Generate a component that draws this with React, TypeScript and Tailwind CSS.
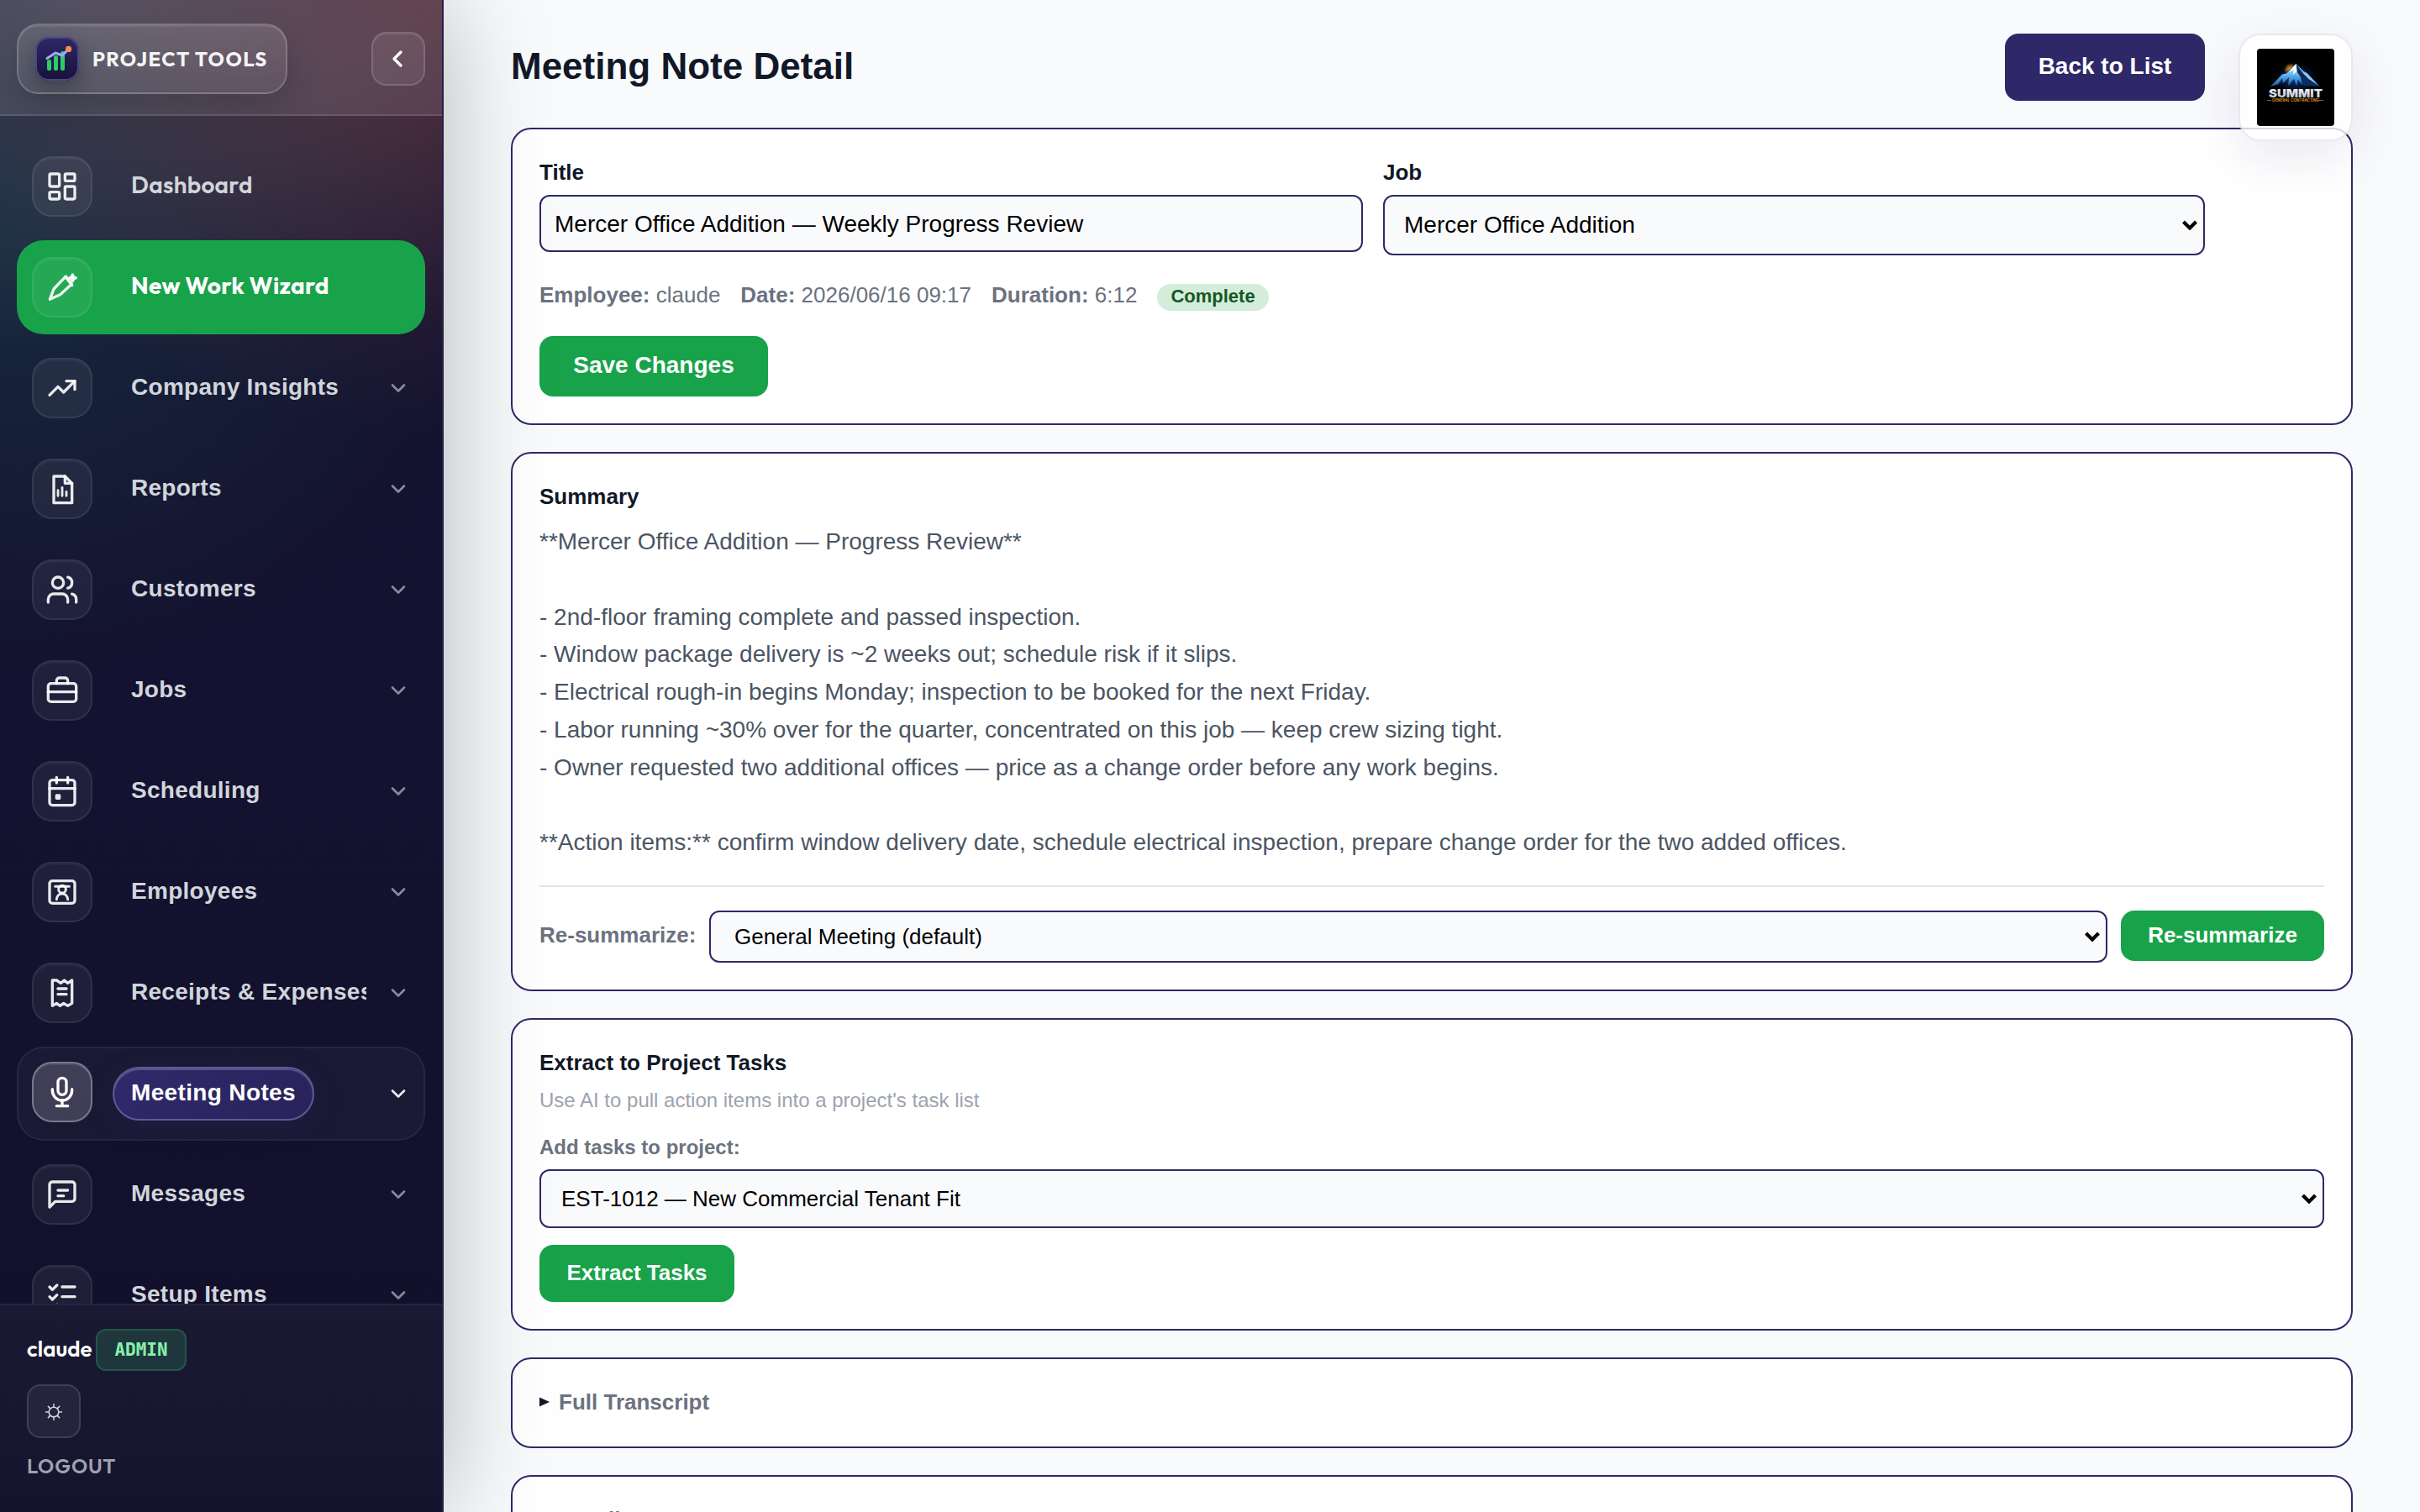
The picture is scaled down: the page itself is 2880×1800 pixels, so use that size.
import React from "react";

const geo = "font-['Outfit','Lato',sans-serif]";

type NavItem = {
  label: string;
  icon: React.ReactNode;
  chevron?: boolean;
  kind?: "primary" | "active" | "brand";
};

const nav: NavItem[] = [
  {
    label: "Dashboard",
    kind: "brand",
    chevron: false,
    icon: (
      <>
        <rect x="3" y="3" width="7" height="9" rx="1" />
        <rect x="14" y="3" width="7" height="5" rx="1" />
        <rect x="14" y="12" width="7" height="9" rx="1" />
        <rect x="3" y="16" width="7" height="5" rx="1" />
      </>
    ),
  },
  {
    label: "New Work Wizard",
    kind: "primary",
    chevron: false,
    icon: (
      <>
        <path d="M3.2 20.6 6 13.2l8.2-8.6 4.6 5.2-8.2 7.4Z" />
        <path d="M14.6 4.2 19 10.6" />
        <path d="m19.4 3 .7 1.7 1.7.6-1.7.8-.7 1.6-.7-1.6-1.5-.8 1.5-.6Z" fill="currentColor" />
      </>
    ),
  },
  {
    label: "Company Insights",
    icon: (
      <>
        <path d="m3 17 6-6 4 4 8-8" />
        <path d="M15 7h6v6" />
      </>
    ),
  },
  {
    label: "Reports",
    icon: (
      <>
        <path d="M6 3h8l5 5v14H6Z" />
        <path d="M14 3v5h5" />
        <path d="M9 13v4M12 11v6M15 14v3" strokeWidth="1.7" />
      </>
    ),
  },
  {
    label: "Customers",
    icon: (
      <>
        <path d="M16 21v-2a4 4 0 0 0-4-4H6a4 4 0 0 0-4 4v2" />
        <circle cx="9" cy="7" r="4" />
        <path d="M22 21v-2a4 4 0 0 0-3-3.87" />
        <path d="M16 3.13a4 4 0 0 1 0 7.75" />
      </>
    ),
  },
  {
    label: "Jobs",
    icon: (
      <>
        <rect x="2" y="7" width="20" height="13" rx="2" />
        <path d="M16 7V5a2 2 0 0 0-2-2h-4a2 2 0 0 0-2 2v2" />
        <path d="M2 13h20" />
      </>
    ),
  },
  {
    label: "Scheduling",
    icon: (
      <>
        <rect x="3" y="4" width="18" height="18" rx="2" />
        <path d="M16 2v4M8 2v4M3 10h18" />
        <rect x="8" y="15" width="2" height="2" />
      </>
    ),
  },
  {
    label: "Employees",
    icon: (
      <>
        <rect x="3" y="4" width="18" height="16" rx="2" />
        <circle cx="12" cy="10" r="2.6" strokeWidth="1.8" />
        <path d="M8 17.2c.2-2.4 1.8-4 4-4s3.8 1.6 4 4" strokeWidth="1.8" />
        <path d="M7 8h10" strokeWidth="1.8" />
      </>
    ),
  },
  {
    label: "Receipts & Expenses",
    icon: (
      <>
        <path d="M5 3v18.2l3-1.8 2.5 1.8 2.5-1.8 3 1.8 3-1.8V3l-3 2-2.500-2-2.500 2L8 3Z" />
        <path d="M9 9h6M9 13h6" />
      </>
    ),
  },
  {
    label: "Meeting Notes",
    kind: "active",
    icon: (
      <>
        <rect x="9" y="2" width="6" height="12" rx="3" />
        <path d="M19 10v1a7 7 0 0 1-14 0v-1" />
        <path d="M12 18v4M8 22h8" />
      </>
    ),
  },
  {
    label: "Messages",
    icon: (
      <>
        <path d="M21 15a2 2 0 0 1-2 2H7l-4 4V5a2 2 0 0 1 2-2h14a2 2 0 0 1 2 2z" />
        <path d="M9 9h7M9 13h4" />
      </>
    ),
  },
  {
    label: "Setup Items",
    icon: (
      <>
        <path d="m3 6 2 2 3.3-3.2" />
        <path d="m3 13 2 2 3.3-3.2" />
        <path d="m3 20 2 2 3.3-3.2" />
        <path d="M12 6h9M12 13h9M12 20h9" />
      </>
    ),
  },
];

function Stroke({ className, width = 2, children }: { className: string; width?: number; children: React.ReactNode }) {
  return (
    <svg
      viewBox="0 0 24 24"
      fill="none"
      stroke="currentColor"
      strokeWidth={width}
      strokeLinecap="round"
      strokeLinejoin="round"
      className={className}
    >
      {children}
    </svg>
  );
}

function NavRow({ item }: { item: NavItem }) {
  const active = item.kind === "active";
  const primary = item.kind === "primary";
  const row = active
    ? "border-white/[0.06] bg-white/[0.035]"
    : primary
      ? "border-transparent bg-[#18a34a]"
      : "border-transparent";
  const tile = active
    ? "border-white/30 bg-white/[0.17] text-white mb-1 shadow-[inset_0_2px_0_rgba(255,255,255,0.08)]"
    : "border-white/[0.08] bg-white/[0.06] text-white/90 shadow-[inset_0_2px_0_rgba(255,255,255,0.04)]";
  const label = active
    ? "border-[#5f5a94] bg-[linear-gradient(135deg,#302a6c,#28235a)] text-white pb-0.5 tracking-[0.35px] shadow-[inset_0_2px_0_rgba(255,255,255,0.2),0_8px_32px_rgba(46,40,104,0.25)]"
    : primary
      ? "border-transparent text-white pb-1 font-['Outfit','Lato',sans-serif] tracking-[0.28px]"
      : item.kind === "brand"
        ? "border-transparent text-[#d1d5db] pb-1 font-['Outfit','Lato',sans-serif] tracking-[0.28px]"
        : "border-transparent text-[#d1d5db] pb-0.5 tracking-[0.28px]";
  const weight = item.kind === "brand" ? "font-semibold" : "font-bold";
  return (
    <div className={`flex h-28 w-full shrink-0 items-center rounded-[32px] border-2 px-4 ${row}`}>
      <div className={`flex size-[72px] shrink-0 items-center justify-center rounded-3xl border-2 ${tile}`}>
        <Stroke className="size-10">{item.icon}</Stroke>
      </div>
      <div className="ml-6 flex min-w-0 flex-1 items-center">
        <div
          className={`flex h-16 max-w-full items-center overflow-hidden border-2 text-[28px] whitespace-nowrap ${weight} ${label} ${
            item.label.length > 18 ? "border-r-0 pl-5" : "rounded-full px-5"
          }`}
        >
          {item.label}
        </div>
      </div>
      {item.chevron !== false && (
        <Stroke className={`ml-6 size-7 shrink-0 ${active ? "text-white/90" : "text-white/50"}`} width={2.3}>
          <path d="m6 9 6 6 6-6" />
        </Stroke>
      )}
    </div>
  );
}

function SelectArrow() {
  return (
    <svg viewBox="0 0 18 12" className="h-3 w-[18px] shrink-0" fill="none" stroke="#000" strokeWidth="4.2">
      <path d="m1.500 2 7.500 7.500L16.500 2" />
    </svg>
  );
}

function Select({ className, children }: { className: string; children: React.ReactNode }) {
  return (
    <div className={`flex items-center justify-between rounded-xl border-2 border-[#2e2868] bg-[#f9fafc] pr-[7px] text-black ${className}`}>
      <span>{children}</span>
      <SelectArrow />
    </div>
  );
}

function Card({ className = "", children }: { className?: string; children: React.ReactNode }) {
  return <section className={`shrink-0 rounded-3xl border-2 border-[#2e2868] bg-white p-8 ${className}`}>{children}</section>;
}

function Heading({ children }: { children: React.ReactNode }) {
  return <h2 className="text-[26px] leading-[38px] font-bold text-[#111827]">{children}</h2>;
}

function AppMark() {
  return (
    <div className="size-[52px] shrink-0 overflow-hidden rounded-2xl bg-[linear-gradient(180deg,#2e2868,#161238)] shadow-[0_8px_24px_rgba(0,0,0,0.3)]">
      <svg viewBox="0 0 52 52" className="size-full" fill="none">
        <rect x="1" y="1" width="50" height="50" rx="15" stroke="#4b4683" strokeWidth="2" />
        <rect x="14" y="27" width="5" height="13" rx="2" fill="#2fcb69" />
        <rect x="22" y="22" width="5" height="18" rx="2" fill="#2fcb69" />
        <rect x="30" y="17" width="5" height="23" rx="2" fill="#2fcb69" />
        <path d="m14 25.500 10-6.500 8 3 7.500-7.500" stroke="#a5a8ff" strokeWidth="3" strokeLinecap="round" strokeLinejoin="round" />
        <circle cx="39.6" cy="14.4" r="3.6" fill="#ff8a4c" />
      </svg>
    </div>
  );
}

function SummitLogo() {
  return (
    <svg viewBox="0 0 92 92" className="size-[92px] rounded">
      <defs>
        <radialGradient id="glow" cx="0.5" cy="0.45" r="0.4">
          <stop offset="0" stopColor="#0b4aa8" stopOpacity="0.9" />
          <stop offset="0.6" stopColor="#04204f" stopOpacity="0.5" />
          <stop offset="1" stopColor="#000" stopOpacity="0" />
        </radialGradient>
        <radialGradient id="sun">
          <stop offset="0" stopColor="#ffb020" />
          <stop offset="0.5" stopColor="#f08a10" stopOpacity="0.7" />
          <stop offset="1" stopColor="#f08a10" stopOpacity="0" />
        </radialGradient>
        <linearGradient id="slope" x1="0" y1="0" x2="0" y2="1">
          <stop offset="0" stopColor="#f2f9ff" />
          <stop offset="0.5" stopColor="#5fb2ee" />
          <stop offset="1" stopColor="#1258a6" />
        </linearGradient>
        <linearGradient id="steel" x1="0" y1="0" x2="0" y2="1">
          <stop offset="0" stopColor="#ffffff" />
          <stop offset="1" stopColor="#b4bccd" />
        </linearGradient>
      </defs>
      <rect width="92" height="92" fill="#000" />
      <ellipse cx="46" cy="38" rx="36" ry="28" fill="url(#glow)" />
      <circle cx="40" cy="25" r="8" fill="url(#sun)" />
      <path d="M46.500 18 16 45l8-2 9-4 6 5 7-6 10 6 19 1-15-16-4-2Z" fill="#0a2c5e" />
      <path d="M46.500 18 35 29.500l-5 1L16 45l9-3 5-7 1 6 7-7-1 10 7-8 3 8 2-7 5 6-2-9-4-6Z" fill="url(#slope)" />
      <path d="m46.500 18 9 9 4 2 14 15-12-8-6-6Z" fill="#8fc4ee" />
      <path d="m46.500 18 .5 9-4 4 1-6-6 3Z" fill="#fff" />
      <text x="46" y="57.5" textAnchor="middle" textLength="64" lengthAdjust="spacingAndGlyphs" className="font-['Inter','Liberation_Sans',sans-serif] text-[13.5px] font-black" fill="url(#steel)">
        SUMMIT
      </text>
      <path d="M12 61.500h5M74 61.500h5" stroke="#b5791a" strokeWidth="0.8" />
      <text x="46" y="63" textAnchor="middle" textLength="56" lengthAdjust="spacingAndGlyphs" className="font-['Inter','Liberation_Sans',sans-serif] text-[4.2px] font-bold" fill="#d8921f">
        GENERAL CONTRACTING
      </text>
    </svg>
  );
}

const summary = `**Mercer Office Addition — Progress Review**

- 2nd-floor framing complete and passed inspection.
- Window package delivery is ~2 weeks out; schedule risk if it slips.
- Electrical rough-in begins Monday; inspection to be booked for the next Friday.
- Labor running ~30% over for the quarter, concentrated on this job — keep crew sizing tight.
- Owner requested two additional offices — price as a change order before any work begins.

**Action items:** confirm window delivery date, schedule electrical inspection, prepare change order for the two added offices.`;

export default function App() {
  return (
    <div className="flex h-[1800px] w-[2880px] overflow-hidden bg-[#f9fafc] font-['Liberation_Sans',Arial,sans-serif]">
      <aside className="relative z-10 flex w-[528px] shrink-0 flex-col border-r-2 border-[#25224a] bg-[radial-gradient(620px_520px_at_100%_0%,rgba(255,90,60,0.2),transparent_100%),radial-gradient(600px_520px_at_0%_16%,rgba(45,180,150,0.14),transparent_100%),radial-gradient(900px_420px_at_20%_0%,rgba(255,255,255,0.14),transparent_100%),linear-gradient(180deg,#15122f,#131230_50%,#120f2a)] shadow-[0_0_120px_rgba(0,0,0,0.28)]">
        <header className="flex h-[138px] shrink-0 items-start justify-between border-b-2 border-white/[0.12] bg-white/[0.1] px-5 pt-7">
          <div className="flex h-[84px] w-[322px] items-center gap-4 rounded-[26px] border-2 border-white/[0.18] bg-[linear-gradient(180deg,rgba(255,255,255,0.12),rgba(255,255,255,0.06))] px-5 shadow-[inset_0_2px_0_rgba(255,255,255,0.08),0_16px_40px_rgba(0,0,0,0.18)]">
            <AppMark />
            <span className={`${geo} text-2xl font-bold tracking-[1.35px] whitespace-nowrap text-white/95`}>PROJECT TOOLS</span>
          </div>
          <button className="mt-2.5 flex size-16 items-center justify-center rounded-[18px] border-2 border-white/[0.14] bg-white/[0.08] text-white shadow-[inset_0_2px_0_rgba(255,255,255,0.05)]">
            <Stroke className="mr-0.5 size-8" width={2.5}>
              <path d="m15 18-6-6 6-6" />
            </Stroke>
          </button>
        </header>
        <nav className="flex min-h-0 flex-1 flex-col gap-2 overflow-hidden px-5 pt-7">
          {nav.map((item) => (
            <NavRow key={item.label} item={item} />
          ))}
        </nav>
        <footer className="flex h-[248px] shrink-0 flex-col items-start border-t-2 border-white/[0.07] bg-[linear-gradient(180deg,rgba(255,255,255,0.04),rgba(255,255,255,0.015))] px-8 pt-7">
          <div className="flex h-[50px] items-center">
            <span className={`${geo} w-[82px] pb-1 text-[26px] font-semibold text-white`}>claude</span>
            <span className="flex h-[50px] w-[108px] items-center justify-center rounded-xl border-2 border-[#225848] bg-[#1f363d] font-['JetBrains_Mono','DejaVu_Sans_Mono',monospace] text-[21px] font-extrabold text-[#86efac]">
              ADMIN
            </span>
          </div>
          <button className="mt-4 flex size-16 items-center justify-center rounded-2xl border-2 border-white/[0.12] bg-white/[0.06] text-[#d1d5db]">
            <svg viewBox="0 0 20 20" className="mt-0.5 size-5" fill="none" stroke="currentColor" strokeWidth="1.5">
              <circle cx="10" cy="10" r="5.8" />
              <path d="M10 0v4.200M10 15.800V20M0 10h4.200M15.800 10H20M2.900 2.900l3 3M14.100 14.100l3 3M17.100 2.900l-3 3M5.900 14.100l-3 3" />
            </svg>
          </button>
          <span className={`${geo} mt-[17px] text-2xl font-semibold tracking-[0.8px] text-[#9ca3af]`}>LOGOUT</span>
        </footer>
      </aside>

      <main className="relative flex min-w-0 flex-1 flex-col gap-8 pr-20 pl-20">
        <div className="-mb-8 flex h-[152px] shrink-0 items-start justify-between pt-10 pr-44">
          <h1 className="pt-[14px] text-[44px] leading-[50px] font-bold text-[#111827]">Meeting Note Detail</h1>
          <button className="flex h-20 w-[238px] items-center justify-center rounded-2xl bg-[#2e2868] pb-0.5 text-[28px] font-bold text-white">Back to List</button>
        </div>
        <div className="absolute top-10 right-20 flex h-32 w-[136px] justify-center rounded-[26px] border-2 border-[#2e2868]/10 bg-white/80 pt-4 shadow-[0_20px_60px_rgba(46,40,104,0.1)]">
          <SummitLogo />
        </div>

        <Card className="h-[354px]">
          <div className="grid grid-cols-[980px_978px] gap-6">
            <div>
              <Heading>Title</Heading>
              <div className="mt-2 flex h-[68px] items-center rounded-xl border-2 border-[#2e2868] bg-[#f9fafc] px-4 pt-0.5 text-[28px] text-black">
                Mercer Office Addition — Weekly Progress Review
              </div>
            </div>
            <div>
              <Heading>Job</Heading>
              <Select className="mt-2 h-[72px] pl-[23px] text-[28px]">Mercer Office Addition</Select>
            </div>
          </div>
          <div className="mt-7 flex h-[38px] items-center gap-6 text-[26px] text-[#6b7280]">
            <span><b>Employee:</b> claude</span>
            <span><b>Date:</b> 2026/06/16 09:17</span>
            <span><b>Duration:</b> 6:12</span>
            <span className="mt-1.5 flex h-8 items-center rounded-full bg-[#d4edda] px-4 pb-[3px] text-[22px] font-bold text-[#155724]">Complete</span>
          </div>
          <button className="mt-[30px] flex h-[72px] w-[272px] items-center justify-center rounded-2xl bg-[#18a34a] pb-0.5 text-[28px] font-bold text-white">Save Changes</button>
        </Card>

        <Card className="h-[642px]">
          <Heading>Summary</Heading>
          <p className="mt-[13px] h-[403px] text-[28px] leading-[44.8px] whitespace-pre-wrap text-[#4b5563]">{summary}</p>
          <div className="mt-7 flex items-start gap-4 border-t-2 border-[#e5e5e7] pt-7">
            <span className="w-[186px] pt-3.5 text-[26px] leading-[30px] font-bold whitespace-nowrap text-[#6b7280]">Re-summarize:</span>
            <Select className="h-[62px] flex-1 pl-7 text-[26px]">General Meeting (default)</Select>
            <button className="flex h-[60px] w-[242px] items-center justify-center rounded-2xl bg-[#18a34a] pb-0.5 text-[26px] font-bold text-white">Re-summarize</button>
          </div>
        </Card>

        <Card className="h-[372px]">
          <Heading>Extract to Project Tasks</Heading>
          <p className="mt-2 text-2xl leading-9 text-[#9ca3af]">Use AI to pull action items into a project's task list</p>
          <p className="mt-5 text-2xl leading-9 font-bold text-[#6b7280]">Add tasks to project:</p>
          <Select className="mt-2 h-[70px] pl-6 text-[26px]">EST-1012 — New Commercial Tenant Fit</Select>
          <button className="mt-5 flex h-[68px] w-[232px] items-center justify-center rounded-2xl bg-[#18a34a] pb-0.5 text-[26px] font-bold text-white">Extract Tasks</button>
        </Card>

        <Card className="h-[108px]">
          <div className="flex h-[38px] items-center text-[26px] font-bold text-[#6b7280]">
            <svg viewBox="0 0 12 12" className="mr-[11px] size-3" fill="#111827"><path d="M0 .500 12 6 0 11.500Z" /></svg>
            Full Transcript
          </div>
        </Card>

        <Card className="h-[108px]">
          <div className="flex h-[38px] items-center text-[26px] font-bold text-[#6b7280]">
            <svg viewBox="0 0 12 12" className="mr-[15px] size-3" fill="#111827"><path d="M0 .500 12 6 0 11.500Z" /></svg>
            Email
          </div>
        </Card>
      </main>
    </div>
  );
}
